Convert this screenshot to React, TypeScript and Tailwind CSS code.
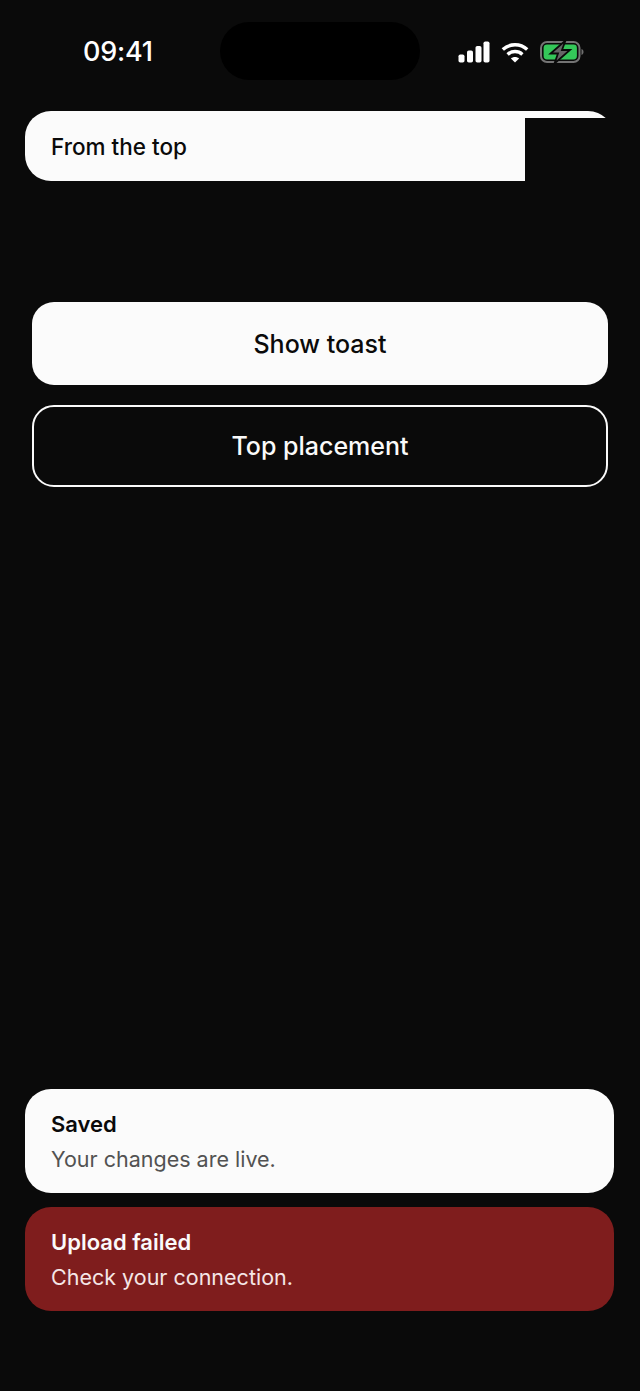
const SANS = "font-['Inter','Liberation_Sans',sans-serif]";

function Signal() {
  return (
    <svg width="32" height="22" viewBox="0 0 32 22" fill="#fff">
      <rect x="0.5" y="13.5" width="6" height="8" rx="1.8" />
      <rect x="9" y="9.5" width="6" height="12" rx="1.8" />
      <rect x="17.5" y="5" width="6" height="16.5" rx="1.8" />
      <rect x="25.5" y="0.5" width="6" height="21" rx="1.8" />
    </svg>
  );
}

function Wifi() {
  return (
    <svg width="28" height="21" viewBox="0 0 28 21" fill="none" stroke="#fff" strokeWidth="3.4">
      <path d="M1.8 7.6C8.6 1.2 19.4 1.2 26.2 7.6" />
      <path d="M6.6 12.4C10.8 8.6 17.2 8.6 21.4 12.4" />
      <path d="M14 20.6L9.9 16.4C12.2 14.4 15.8 14.4 18.1 16.4Z" fill="#fff" stroke="none" />
    </svg>
  );
}

function Battery() {
  return (
    <svg width="44" height="22" viewBox="0 0 44 22" fill="none">
      <rect x="1" y="1" width="38.5" height="20" rx="6" stroke="#747474" strokeWidth="2" />
      <rect x="3.6" y="3.6" width="33.3" height="14.8" rx="3.4" fill="#34c759" />
      <path d="M41.5 8v6c1.300-.4 2-1.600 2-3s-.7-2.600-2-3z" fill="#6f6f6f" />
      <path d="M25.500 -0.500L10.500 12.500h7.500l-3.500 10L30 9h-8z" fill="#666666" stroke="#0a0a0a" strokeWidth="1.800" />
    </svg>
  );
}

function StatusBar() {
  return (
    <div className="h-[111px] relative">
      <div className="absolute left-[220px] top-[22px] w-[200px] h-[58px] rounded-[29px] bg-black" />
      <div className="absolute left-[83px] top-[35px] text-[27px] leading-[34px] font-medium text-white tracking-[-0.2px]">09:41</div>
      <div className="absolute left-[458px] top-[41px] flex items-center gap-[11px]">
        <Signal />
        <Wifi />
        <Battery />
      </div>
    </div>
  );
}

function Toast({ title, body, danger }: { title: string; body: string; danger?: boolean }) {
  return (
    <div className={`h-[104px] rounded-[26px] pl-[26px] pt-[21px] ${danger ? 'bg-[#7f1d1d]' : 'bg-[#fbfbfb]'}`}>
      <div className={`text-[22px] leading-[29px] font-semibold ${danger ? 'text-[#fafafa]' : 'text-[#0a0a0a]'}`}>{title}</div>
      <div className={`mt-[6px] text-[21.500px] leading-[29px] ${danger ? 'text-[#f5e6e6]' : 'text-[#525252]'}`}>{body}</div>
    </div>
  );
}

export default function App() {
  return (
    <div className={`${SANS} h-[1391px] overflow-hidden bg-[#0a0a0a] flex flex-col`}>
      <StatusBar />

      <div className="relative ml-[25px] w-[589px] h-[70px] rounded-[26px] bg-[#fbfbfb] pl-[26px] pt-[2px] flex items-center">
        <span className="text-[22.500px] font-medium text-[#0a0a0a]">From the top</span>
        <div className="absolute left-[500px] top-[7px] w-[89px] h-[63px] bg-[#0a0a0a]" />
        <div className="absolute right-0 top-0 w-[7px] h-[7px] bg-[#0a0a0a]" />
      </div>

      <div className="mt-[121px] mx-[32px] flex flex-col gap-[20px]">
        <button className="h-[83px] pt-[2px] rounded-[22px] bg-[#fbfbfb] text-[25px] font-medium text-[#0a0a0a]">Show toast</button>
        <button className="h-[82px] pt-[2px] rounded-[22px] border-[2.500px] border-[#fafafa] text-[25px] font-medium text-[#fafafa]">Top placement</button>
      </div>

      <div className="mt-auto mb-[80px] ml-[25px] w-[589px] flex flex-col gap-[14px]">
        <Toast title="Saved" body="Your changes are live." />
        <Toast title="Upload failed" body="Check your connection." danger />
      </div>
    </div>
  );
}
